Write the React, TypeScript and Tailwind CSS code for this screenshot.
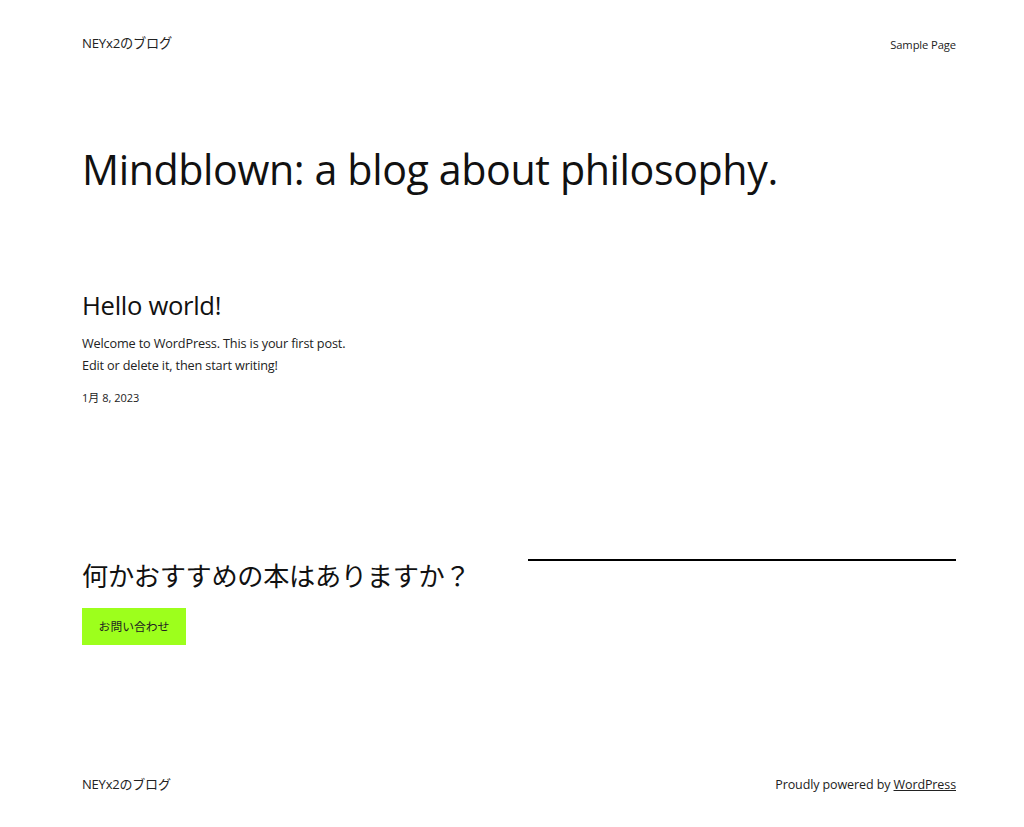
const FONT = "font-['Open_Sans','Noto_Sans_CJK_JP',sans-serif]";

export default function App() {
  return (
    <div className={`${FONT} min-h-[827px] bg-white text-[#111] flex flex-col pl-[82px] pr-[68px]`}>
      <header className="flex items-center justify-between h-[88px]">
        <a className="text-[13.2px] text-[#222] tracking-[-0.2px]">NEYx2のブログ</a>
        <nav className="text-[11.2px] text-[#222] tracking-[-0.1px] pt-[2px]">Sample Page</nav>
      </header>

      <h1 className="mt-[53px] text-[41.2px] leading-[56px] font-normal tracking-[-0.4px]">
        Mindblown: a blog about philosophy.
      </h1>

      <article className="mt-[92px]">
        <h2 className="text-[25.6px] leading-[34px] tracking-[-0.3px]">Hello world!</h2>
        <div className="mt-[9px] text-[12.7px] leading-[22px] text-[#222] tracking-[-0.15px]">
          <p>Welcome to WordPress. This is your first post.</p>
          <p>Edit or delete it, then start writing!</p>
        </div>
        <p className="mt-[13px] text-[11px] leading-[18px] text-[#222]">1月 8, 2023</p>
      </article>

      <section className="mt-[152px] flex gap-[32px]">
        <div className="flex-1">
          <h3 className="text-[26.2px] leading-[34px] tracking-[-0.3px]">何かおすすめの本はありますか？</h3>
          <button className="mt-[15px] w-[104px] h-[37px] bg-[#9dff1c] text-[11.8px] text-[#222]">
            お問い合わせ
          </button>
        </div>
        <div className="w-[428px]">
          <hr className="border-0 h-[2px] bg-black" />
        </div>
      </section>

      <footer className="mt-auto flex items-center justify-between h-[80px] pb-[4px] text-[#222]">
        <span className="text-[13px] tracking-[-0.2px]">NEYx2のブログ</span>
        <span className="text-[12.5px] tracking-[-0.1px]">
          Proudly powered by <a className="underline">WordPress</a>
        </span>
      </footer>
    </div>
  );
}
